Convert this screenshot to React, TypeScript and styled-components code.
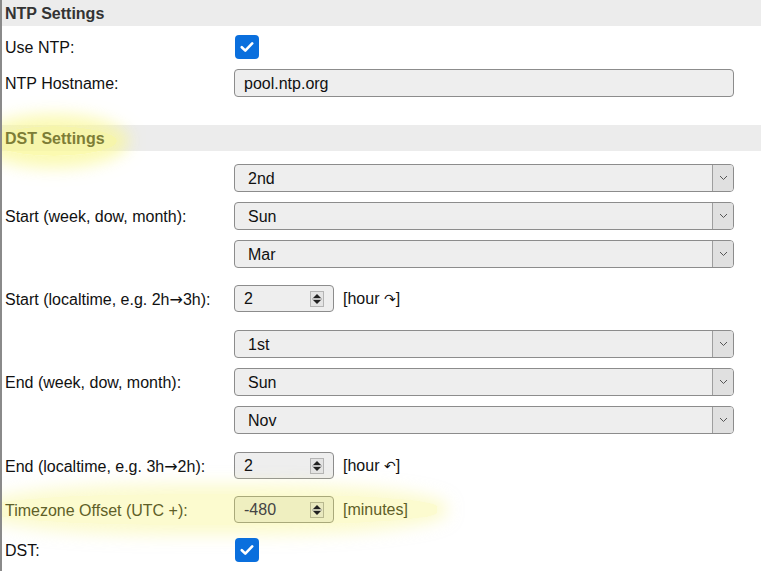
import React from "react";
import styled, { createGlobalStyle } from "styled-components";

const GlobalStyle = createGlobalStyle`
  html, body {
    margin: 0;
    padding: 0;
    background: #fff;
  }
  body {
    font-family: "Liberation Sans", Arial, sans-serif;
    font-size: 16px;
    color: #111;
  }
`;

const Panel = styled.div`
  width: 761px;
  height: 571px;
  box-sizing: border-box;
  border-left: 2px solid #8a8a8a;
  overflow: hidden;
`;

const SectionHeader = styled.div<{ $glow?: boolean; $top?: number }>`
  height: 26px;
  box-sizing: border-box;
  padding-top: 2px;
  margin-top: ${(p) => p.$top ?? 0}px;
  display: flex;
  align-items: center;
  padding-left: 3px;
  background: #ececec;
  font-weight: bold;
  font-size: 16px;
  color: ${(p) => (p.$glow ? "#7d7d36" : "#333")};
  position: relative;
`;

const HeaderGlow = styled.span`
  position: relative;
  &::before {
    content: "";
    position: absolute;
    left: -14px;
    right: -12px;
    top: -4px;
    bottom: -8px;
    border-radius: 50%;
    background: rgba(250, 248, 150, 0.75);
    box-shadow: 0 0 16px 12px rgba(250, 248, 150, 0.7);
    z-index: 0;
  }
  & > span {
    position: relative;
    z-index: 1;
  }
`;

const Form = styled.div<{ $top: number }>`
  display: flex;
  flex-direction: column;
  padding-top: ${(p) => p.$top}px;
`;

const Row = styled.div<{ $gap?: number }>`
  display: grid;
  grid-template-columns: 229px 500px;
  align-items: center;
  margin-top: ${(p) => p.$gap ?? 0}px;
  padding-left: 3px;
  position: relative;
`;

const Label = styled.label<{ $hl?: boolean }>`
  font-size: 16px;
  padding-top: 2px;
  position: relative;
  color: ${(p) => (p.$hl ? "#5f5f28" : "#111")};
`;

const Arrow = styled.span`
  font-family: "DejaVu Sans", sans-serif;
  font-size: 16px;
  line-height: 1;
`;

const Stack = styled.div`
  display: flex;
  flex-direction: column;
  gap: 10px;
`;

const CheckBox = styled.span`
  width: 24px;
  height: 24px;
  margin-left: 1px;
  border-radius: 4px;
  background: #0a6fdd;
  display: flex;
  align-items: center;
  justify-content: center;
`;

const TextInput = styled.div`
  height: 28px;
  box-sizing: border-box;
  border: 1px solid #8c8c8c;
  border-radius: 4px;
  background: #eeeeee;
  display: flex;
  align-items: center;
  padding-left: 9px;
  padding-top: 1px;
  font-size: 16px;
`;

const SelectBox = styled.div`
  height: 28px;
  box-sizing: border-box;
  border: 1px solid #8c8c8c;
  border-radius: 4px;
  background: #eeeeee;
  display: flex;
  align-items: center;
  font-size: 16px;
  overflow: hidden;
`;

const SelectText = styled.span`
  flex: 1;
  padding-left: 13px;
  padding-top: 1px;
`;

const SelectArrow = styled.span`
  width: 20px;
  height: 100%;
  border-left: 1px solid #9e9e9e;
  background: #e0e0e0;
  display: flex;
  align-items: center;
  justify-content: center;
`;

const NumberLine = styled.div`
  display: flex;
  align-items: center;
  gap: 9px;
  position: relative;
`;

const NumberBox = styled.div<{ $hl?: boolean }>`
  width: 100px;
  height: 27px;
  box-sizing: border-box;
  border: 1px solid ${(p) => (p.$hl ? "#a9a97a" : "#8c8c8c")};
  border-radius: 4px;
  background: ${(p) => (p.$hl ? "#efefc0" : "#eeeeee")};
  display: flex;
  align-items: center;
  padding-left: 9px;
  padding-right: 9px;
  font-size: 16px;
  color: ${(p) => (p.$hl ? "#444" : "#111")};
`;

const NumberValue = styled.span`
  flex: 1;
  padding-top: 1px;
`;

const Spinner = styled.span<{ $hl?: boolean }>`
  width: 14px;
  height: 16px;
  box-sizing: border-box;
  border: 1px solid ${(p) => (p.$hl ? "#b8b88e" : "#b4b4b4")};
  background: ${(p) => (p.$hl ? "#e9e9bf" : "#e4e4e4")};
  display: flex;
  align-items: center;
  justify-content: center;
`;

const Unit = styled.span<{ $hl?: boolean }>`
  font-size: 16px;
  padding-top: 1px;
  color: ${(p) => (p.$hl ? "#5f5f28" : "#111")};
`;

const Arc = styled.span`
  font-family: "DejaVu Sans", sans-serif;
  font-size: 14px;
  line-height: 1;
`;

const RowGlow = styled.div`
  position: absolute;
  left: -10px;
  top: -2px;
  width: 445px;
  bottom: -2px;
  border-radius: 40%;
  background: rgba(250, 248, 160, 0.5);
  box-shadow: 0 0 16px 10px rgba(250, 248, 160, 0.5);
  pointer-events: none;
`;

const Check = () => (
  <CheckBox>
    <svg width="14" height="12" viewBox="0 0 14 12">
      <polyline points="1.8,6.2 5.3,9.6 12.2,2.4" fill="none" stroke="#fff" strokeWidth="2.6" strokeLinecap="round" strokeLinejoin="round" />
    </svg>
  </CheckBox>
);

const Select = ({ value }: { value: string }) => (
  <SelectBox>
    <SelectText>{value}</SelectText>
    <SelectArrow>
      <svg width="9" height="6" viewBox="0 0 9 6">
        <polyline points="1,1 4.5,4.5 8,1" fill="none" stroke="#555" strokeWidth="1" />
      </svg>
    </SelectArrow>
  </SelectBox>
);

const Num = ({ value, hl }: { value: string; hl?: boolean }) => (
  <NumberBox $hl={hl}>
    <NumberValue>{value}</NumberValue>
    <Spinner $hl={hl}>
      <svg width="10" height="14" viewBox="0 0 10 14">
        <polygon points="5,2 9,6 1,6" fill="#222" />
        <line x1="0" y1="7" x2="10" y2="7" stroke="#999" strokeWidth="1" />
        <polygon points="5,12 9,8 1,8" fill="#222" />
      </svg>
    </Spinner>
  </NumberBox>
);

export default function App() {
  return (
    <Panel>
      <GlobalStyle />
      <SectionHeader>NTP Settings</SectionHeader>
      <Form $top={9}>
        <Row>
          <Label>Use NTP:</Label>
          <Check />
        </Row>
        <Row $gap={10}>
          <Label>NTP Hostname:</Label>
          <TextInput>pool.ntp.org</TextInput>
        </Row>
      </Form>
      <SectionHeader $top={28} $glow>
        <HeaderGlow>
          <span>DST Settings</span>
        </HeaderGlow>
      </SectionHeader>
      <Form $top={13}>
        <Row>
          <Label>Start (week, dow, month):</Label>
          <Stack>
            <Select value="2nd" />
            <Select value="Sun" />
            <Select value="Mar" />
          </Stack>
        </Row>
        <Row $gap={17}>
          <Label>
            Start (localtime, e.g. 2h<Arrow>→</Arrow>3h):
          </Label>
          <NumberLine>
            <Num value="2" />
            <Unit>
              [hour <Arc>↷</Arc>]
            </Unit>
          </NumberLine>
        </Row>
        <Row $gap={18}>
          <Label>End (week, dow, month):</Label>
          <Stack>
            <Select value="1st" />
            <Select value="Sun" />
            <Select value="Nov" />
          </Stack>
        </Row>
        <Row $gap={18}>
          <Label>
            End (localtime, e.g. 3h<Arrow>→</Arrow>2h):
          </Label>
          <NumberLine>
            <Num value="2" />
            <Unit>
              [hour <Arc>↶</Arc>]
            </Unit>
          </NumberLine>
        </Row>
        <Row $gap={17}>
          <RowGlow />
          <Label $hl>Timezone Offset (UTC +):</Label>
          <NumberLine>
            <Num value="-480" hl />
            <Unit $hl>[minutes]</Unit>
          </NumberLine>
        </Row>
        <Row $gap={15}>
          <Label>DST:</Label>
          <Check />
        </Row>
      </Form>
    </Panel>
  );
}
